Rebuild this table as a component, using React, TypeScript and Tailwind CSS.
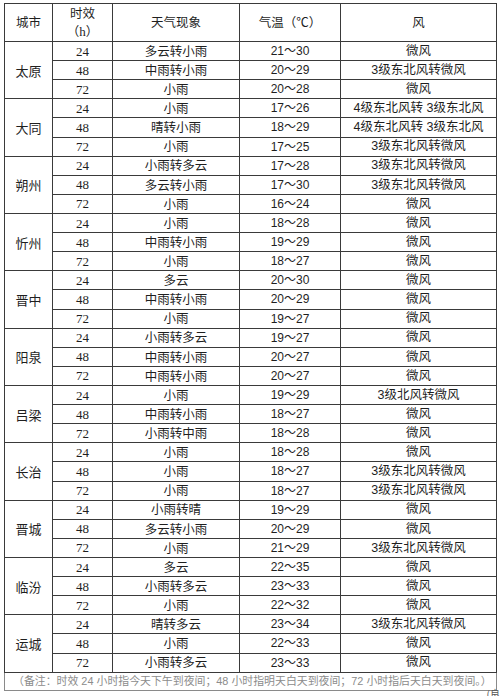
import React from 'react';

type Row = [string, string, string, string];
type City = { name: string; rows: Row[] };

const cities: City[] = [
  { name: '太原', rows: [['24', '多云转小雨', '21～30', '微风'], ['48', '中雨转小雨', '20～29', '3级东北风转微风'], ['72', '小雨', '20～28', '微风']] },
  { name: '大同', rows: [['24', '小雨', '17～26', '4级东北风转 3级东北风'], ['48', '晴转小雨', '18～29', '4级东北风转 3级东北风'], ['72', '小雨', '17～25', '3级东北风转微风']] },
  { name: '朔州', rows: [['24', '小雨转多云', '17～28', '3级东北风转微风'], ['48', '多云转小雨', '17～30', '3级东北风转微风'], ['72', '小雨', '16～24', '微风']] },
  { name: '忻州', rows: [['24', '小雨', '18～28', '微风'], ['48', '中雨转小雨', '19～29', '微风'], ['72', '小雨', '18～27', '微风']] },
  { name: '晋中', rows: [['24', '多云', '20～30', '微风'], ['48', '中雨转小雨', '20～29', '微风'], ['72', '小雨', '19～27', '微风']] },
  { name: '阳泉', rows: [['24', '小雨转多云', '19～27', '微风'], ['48', '中雨转小雨', '20～27', '微风'], ['72', '中雨转小雨', '20～27', '微风']] },
  { name: '吕梁', rows: [['24', '小雨', '19～29', '3级北风转微风'], ['48', '中雨转小雨', '18～27', '微风'], ['72', '小雨转中雨', '18～28', '微风']] },
  { name: '长治', rows: [['24', '小雨', '18～28', '微风'], ['48', '小雨', '18～27', '3级东北风转微风'], ['72', '小雨', '18～27', '3级东北风转微风']] },
  { name: '晋城', rows: [['24', '小雨转晴', '19～29', '微风'], ['48', '多云转小雨', '20～29', '微风'], ['72', '小雨', '21～29', '3级东北风转微风']] },
  { name: '临汾', rows: [['24', '多云', '22～35', '微风'], ['48', '小雨转多云', '23～33', '微风'], ['72', '小雨', '22～32', '微风']] },
  { name: '运城', rows: [['24', '晴转多云', '23～34', '3级东北风转微风'], ['48', '小雨', '22～33', '微风'], ['72', '小雨转多云', '23～33', '微风']] },
];

const cjk = 'font-["Noto_Sans_CJK_SC",sans-serif] text-[12.5px] leading-none';
const cell = 'border border-[#3a3a3a] p-0 text-center align-middle';

export default function App() {
  return (
    <div className="w-[500px] h-[696px] bg-white text-[#1f1f1f] overflow-hidden relative">
      <div className="pt-[3px] pl-[4px]">
        <table className="table-fixed border-collapse w-[492px] border border-[#8a8a8a]">
          <colgroup>
            <col className="w-[48px]" />
            <col className="w-[60px]" />
            <col className="w-[127px]" />
            <col className="w-[101px]" />
            <col className="w-[156px]" />
          </colgroup>
          <thead>
            <tr className="h-[38px]">
              <th className={`${cell} ${cjk} font-normal`}>城市</th>
              <th className={`${cell} ${cjk} font-normal`}>
                <div className="flex flex-col items-center gap-[5px]">
                  <span>时效</span>
                  <span>（<span className='font-["Liberation_Serif",serif] text-[13px]'>h</span>）</span>
                </div>
              </th>
              <th className={`${cell} ${cjk} font-normal`}>天气现象</th>
              <th className={`${cell} ${cjk} font-normal`}>气温（℃）</th>
              <th className={`${cell} ${cjk} font-normal`}>风</th>
            </tr>
          </thead>
          <tbody>
            {cities.map((c) =>
              c.rows.map((r, i) => (
                <tr key={c.name + r[0]} className="h-[19.12px]">
                  {i === 0 && (
                    <td rowSpan={3} className={`${cell} ${cjk} text-[13px]`}>
                      {c.name}
                    </td>
                  )}
                  <td className={`${cell} font-["Liberation_Serif",serif] text-[13px] leading-none`}>{r[0]}</td>
                  <td className={`${cell} ${cjk}`}>{r[1]}</td>
                  <td className={`${cell} font-["Liberation_Sans","Noto_Sans_CJK_SC",sans-serif] text-[12px] leading-none`}>{r[2]}</td>
                  <td className={`${cell} font-["Liberation_Sans","Noto_Sans_CJK_SC",sans-serif] text-[12.5px] leading-none`}>{r[3]}</td>
                </tr>
              ))
            )}
            <tr className="h-[18px]">
              <td colSpan={5} className='border border-[#8a8a8a] pl-[8px] text-left align-middle whitespace-nowrap overflow-hidden font-["Liberation_Sans","Noto_Sans_CJK_SC",sans-serif] text-[10.9px] leading-none text-[#8c8c8c]'>
                （备注：时效 24 小时指今天下午到夜间；48 小时指明天白天到夜间；72 小时指后天白天到夜间。）
              </td>
            </tr>
          </tbody>
        </table>
      </div>
      <span className='absolute right-0 top-[689px] font-["Noto_Sans_CJK_SC",sans-serif] text-[10px] leading-none text-[#555]'>(良</span>
    </div>
  );
}
